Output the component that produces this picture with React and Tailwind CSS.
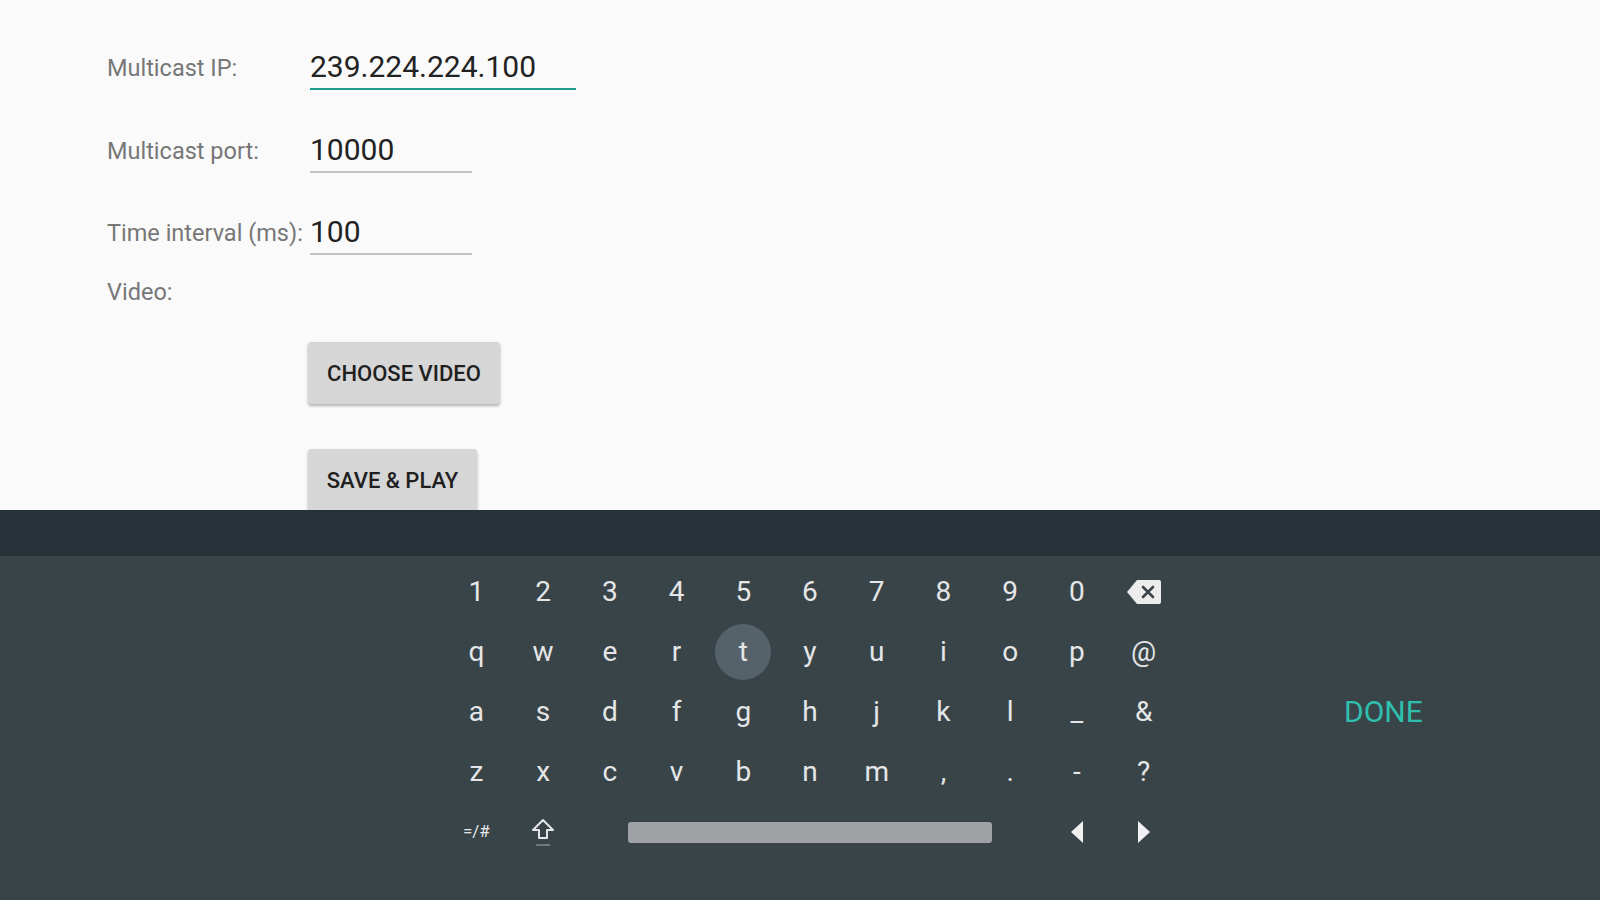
import React from "react";

const rows = [
  ["1", "2", "3", "4", "5", "6", "7", "8", "9", "0", "bksp"],
  ["q", "w", "e", "r", "t", "y", "u", "i", "o", "p", "@"],
  ["a", "s", "d", "f", "g", "h", "j", "k", "l", "_", "&"],
  ["z", "x", "c", "v", "b", "n", "m", ",", ".", "-", "?"],
];

function Backspace() {
  return (
    <svg width="34" height="24" viewBox="0 0 34 24">
      <path d="M10 0 H32 Q34 0 34 2 V22 Q34 24 32 24 H10 L0 12 Z" fill="#ececec" />
      <path d="M16 7 L26 17 M26 7 L16 17" stroke="#394449" strokeWidth="2.6" strokeLinecap="round" />
    </svg>
  );
}

function Field({ label, value, width, active, top }) {
  return (
    <div className={`flex items-center ${top}`}>
      <div className="w-[203px] text-[23.5px] text-[#777777] whitespace-nowrap">{label}</div>
      <div
        className={`${width} border-b-2 pb-[3px] ${active ? "border-[#1e9e8e]" : "border-[#c4c4c4]"}`}
      >
        <div className="h-[38px] pt-[2px] leading-[36px] text-[30px] text-[#222222]">{value}</div>
      </div>
    </div>
  );
}

export default function App() {
  return (
    <div className="w-[1600px] h-[900px] overflow-hidden bg-[#fafafa] font-['Roboto',sans-serif]">
      {/* form */}
      <div className="h-[510px] overflow-hidden pl-[107px] pt-[47px]">
        <Field label="Multicast IP:" value="239.224.224.100" width="w-[266px]" active top="" />
        <Field label="Multicast port:" value="10000" width="w-[162px]" top="mt-[40px]" />
        <Field label="Time interval (ms):" value="100" width="w-[162px]" top="mt-[39px]" />
        <div className="mt-[25px] h-[24px] leading-[24px] text-[23.5px] text-[#777777]">Video:</div>
        <div className="ml-[201px] mt-[38px] flex flex-col items-start gap-[45px]">
          <button className="h-[62px] w-[192px] rounded-[3px] bg-[#d6d6d6] text-[22px] font-medium text-[#1f1f1f] shadow-[0_2px_3px_rgba(0,0,0,0.3)]">
            CHOOSE VIDEO
          </button>
          <button className="h-[62px] w-[169px] rounded-[3px] bg-[#d6d6d6] text-[22px] font-medium text-[#1f1f1f] shadow-[0_2px_3px_rgba(0,0,0,0.3)]">
            SAVE &amp; PLAY
          </button>
        </div>
      </div>

      {/* keyboard top strip */}
      <div className="h-[46px] bg-[#263238]" />

      {/* keyboard */}
      <div className="flex h-[344px] bg-[#394449] pt-[6px]">
        <div className="ml-[443px] grid w-[734px] grid-cols-11 auto-rows-[60px] text-[28px] text-[#e4e6e7]">
          {rows.map((row, ri) =>
            row.map((k, ki) => (
              <div key={`${ri}-${ki}`} className="flex items-center justify-center">
                {k === "bksp" ? (
                  <Backspace />
                ) : k === "t" ? (
                  <div className="flex h-[56px] w-[56px] items-center justify-center rounded-full bg-[#56626a]">
                    {k}
                  </div>
                ) : (
                  k
                )}
              </div>
            ))
          )}
          <div className="flex items-center justify-center text-[17px]">=/#</div>
          <div className="flex flex-col items-center justify-center gap-[4px]">
            <svg width="24" height="22" viewBox="0 0 24 22">
              <path
                d="M12 2 L22 12 L16 12 L16 20 L8 20 L8 12 L2 12 Z"
                fill="none"
                stroke="#e4e6e7"
                strokeWidth="2"
                strokeLinejoin="round"
              />
            </svg>
            <div className="h-[2px] w-[14px] bg-[#6d777c]" />
          </div>
          <div className="col-span-7 flex items-center px-[52px]">
            <div className="h-[21px] w-full rounded-[3px] bg-[#9ea2a5]" />
          </div>
          <div className="flex items-center justify-center">
            <svg width="14" height="24" viewBox="0 0 14 24">
              <path d="M13 1 L1 12 L13 23 Z" fill="#f0f0f0" />
            </svg>
          </div>
          <div className="flex items-center justify-center">
            <svg width="14" height="24" viewBox="0 0 14 24">
              <path d="M1 1 L13 12 L1 23 Z" fill="#f0f0f0" />
            </svg>
          </div>
        </div>
        <div className="ml-[167px] pt-[119px]">
          <div className="flex h-[60px] items-center text-[30px] text-[#2ebfad]">DONE</div>
        </div>
      </div>
    </div>
  );
}
